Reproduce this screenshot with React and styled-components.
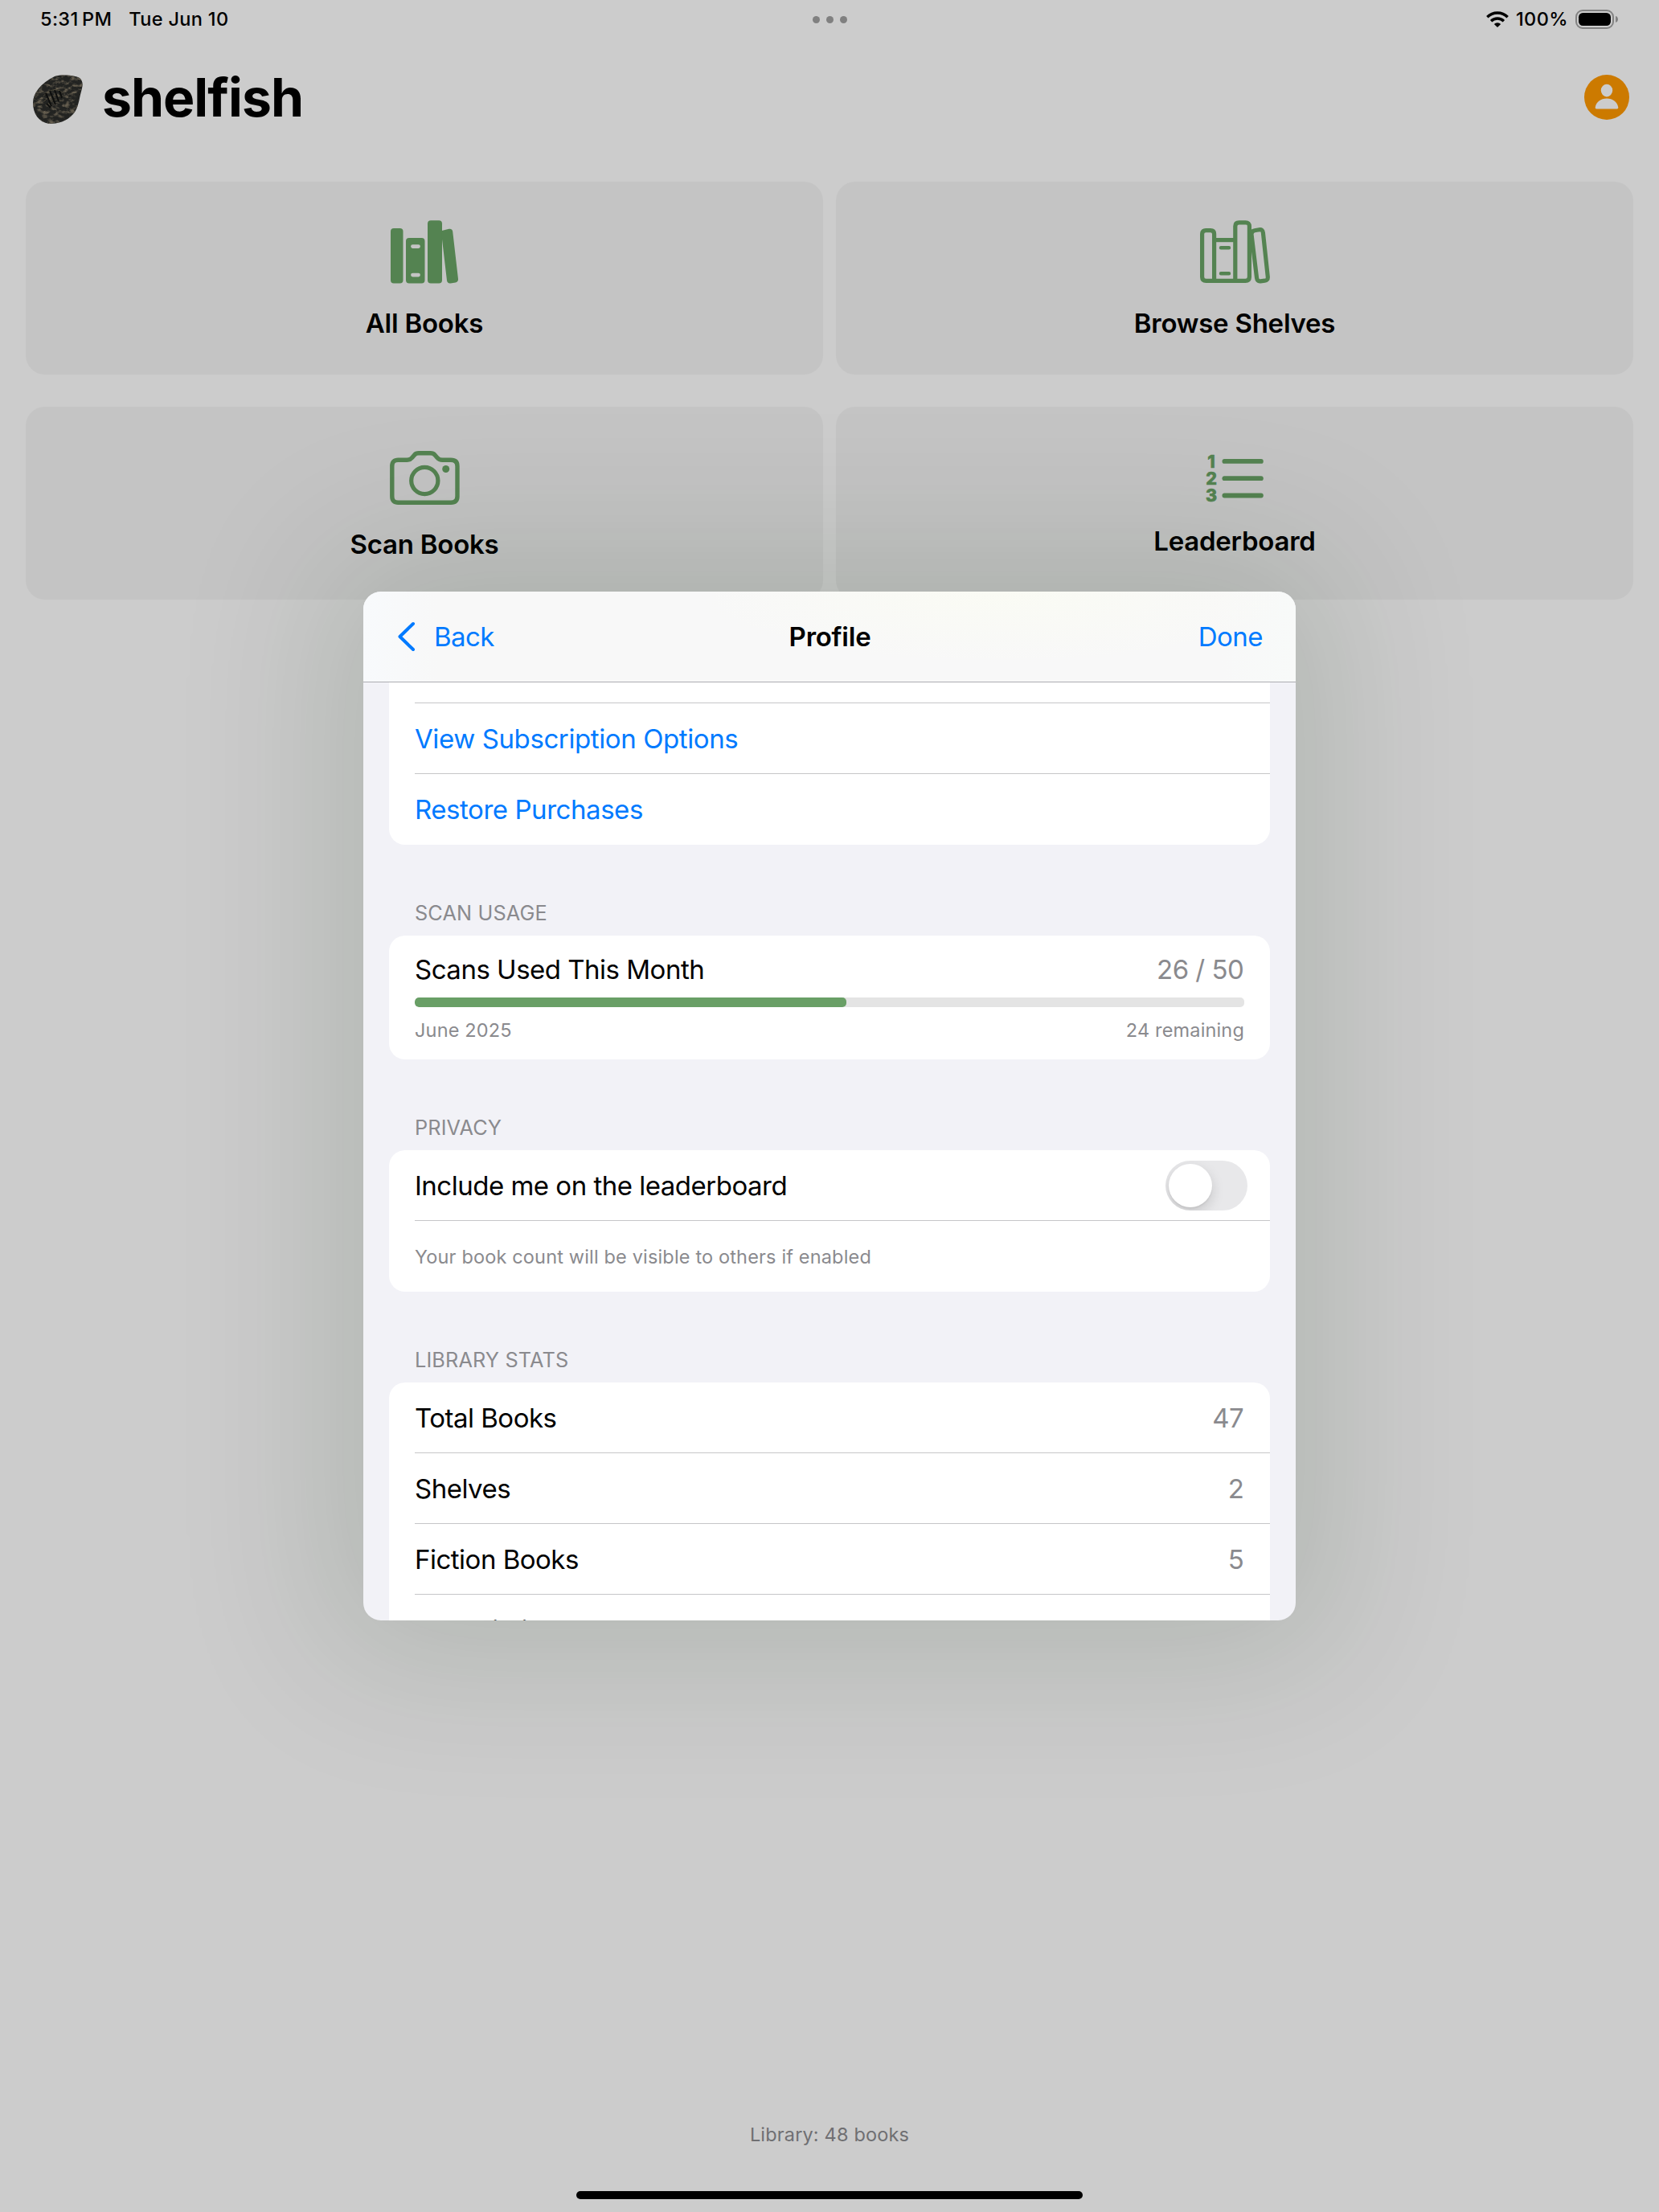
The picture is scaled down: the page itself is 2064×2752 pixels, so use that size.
import React from "react";
import styled, { createGlobalStyle } from "styled-components";

const Global = createGlobalStyle`
  * { box-sizing: border-box; }
  html, body { margin: 0; padding: 0; background: #cccccc; }
  body { font-family: Inter, "Liberation Sans", sans-serif; -webkit-font-smoothing: antialiased; }
`;

const green = "#548351";

const Screen = styled.div`
  position: relative;
  width: 2064px;
  height: 2752px;
  overflow: hidden;
  display: flex;
  flex-direction: column;
  background: #cccccc;
  color: #000;
`;

/* status bar */
const StatusBar = styled.header`
  display: grid;
  grid-template-columns: 1fr auto 1fr;
  align-items: center;
  height: 48px;
  padding: 0 51px 0 50px;
  font-size: 23.5px;
  font-weight: 500;
  line-height: 48px;
`;
const Clock = styled.div`
  display: flex;
  gap: 21px;
`;
const Label = styled.span`
  white-space: pre;
  letter-spacing: ${(p) => (p.$track === undefined ? -0.45 : p.$track)}px;
`;
const Dots = styled.div`
  display: flex;
  gap: 8px;
  padding-left: 1px;
`;
const Dot = styled.i`
  width: 9px;
  height: 9px;
  border-radius: 50%;
  background: #808080;
`;
const Indicators = styled.div`
  display: flex;
  align-items: center;
  justify-content: flex-end;
  gap: 9px;
`;

/* title bar */
const TitleBar = styled.div`
  display: flex;
  align-items: center;
  height: 178px;
  padding: 0 37px 32px 40px;
`;
const Brand = styled.h1`
  flex: 1;
  margin: 0 0 0 22px;
  font-size: 66px;
  line-height: 80px;
  font-weight: 700;
  letter-spacing: -1px;
`;

/* tiles */
const Tiles = styled.main`
  display: grid;
  grid-template-columns: 1fr 1fr;
  gap: 40px 16px;
  padding: 0 32px;
`;
const Tile = styled.section`
  display: flex;
  flex-direction: column;
  align-items: center;
  height: 240px;
  padding-top: ${(p) => p.$top}px;
  border-radius: 24px;
  background: #c4c4c4;
`;
const TileTitle = styled.h2`
  margin: ${(p) => p.$gap}px 0 0;
  font-size: 33px;
  line-height: 40px;
  font-weight: 600;
  letter-spacing: -0.24px;
`;
const Spacer = styled.div`
  flex: 1;
`;
const Footer = styled.footer`
  display: flex;
  flex-direction: column;
  align-items: center;
  color: #6f6f72;
  font-size: 23.5px;
  line-height: 32px;
  padding-bottom: 16px;
`;
const HomeIndicator = styled.div`
  width: 630px;
  height: 10px;
  margin-top: 54px;
  border-radius: 5px;
  background: #000;
`;

/* sheet */
const Overlay = styled.div`
  position: absolute;
  inset: 0;
  display: flex;
  align-items: center;
  justify-content: center;
`;
const Sheet = styled.div`
  display: flex;
  flex-direction: column;
  width: 1160px;
  height: 1280px;
  border-radius: 22px;
  overflow: hidden;
  background: #f2f2f7;
  box-shadow: 0 0 190px 48px rgba(0, 40, 0, 0.125);
`;
const NavBar = styled.div`
  flex: none;
  display: grid;
  grid-template-columns: 1fr auto 1fr;
  align-items: center;
  height: 113px;
  padding: 0 41px 0 42px;
  border-bottom: 1px solid #adadb2;
  background:
    radial-gradient(380px 90px at 68% 0, #fafbf4, rgba(250, 251, 244, 0)),
    linear-gradient(90deg, #f8fafc, #f8f8f8 8%, #f8f8f8 92%, #f8faf9);
  font-size: 33px;
  line-height: 40px;
`;
const NavButton = styled.button`
  display: flex;
  align-items: center;
  justify-self: ${(p) => (p.$end ? "end" : "start")};
  gap: 23px;
  padding: 0;
  border: 0;
  background: none;
  color: #007aff;
  font: inherit;
  letter-spacing: -0.55px;
`;
const NavTitle = styled.div`
  font-weight: 600;
  letter-spacing: -0.25px;
`;
const Body = styled.div`
  flex: 1;
  min-height: 0;
  overflow: hidden;
  padding: 0 32px;
`;
const Group = styled.section`
  border-radius: ${(p) => (p.$cut ? "0 0 20px 20px" : "20px")};
  background: #fff;
  overflow: hidden;
`;
const GroupTitle = styled.h3`
  margin: 67px 0 10px;
  padding: 0 32px;
  font-size: 25.3px;
  line-height: 36px;
  font-weight: 400;
  color: #8a8a8e;
  letter-spacing: 0.13px;
`;
const Row = styled.div`
  display: flex;
  align-items: center;
  justify-content: space-between;
  height: 88px;
  margin-left: 32px;
  padding-right: ${(p) => p.$right || 32}px;
  border-bottom: ${(p) => (p.$last ? "0" : "1px solid #c6c6c8")};
  font-size: 33px;
  line-height: 40px;
  color: ${(p) => (p.$link ? "#007aff" : "#000")};
`;
const RowTail = styled.div`
  height: 26px;
  margin-left: 32px;
  border-bottom: 1px solid #c6c6c8;
`;
const Value = styled.span`
  padding-right: 0.8px;
  color: #8a8a8e;
  letter-spacing: -0.55px;
`;
const Note = styled.span`
  color: #8a8a8e;
  font-size: 23.5px;
  letter-spacing: 0.16px;
`;
const RowNote = styled(Note)`
  padding-top: 2px;
`;
const Usage = styled.div`
  height: 154px;
  padding: 22px 32px 0;
`;
const UsageLine = styled.div`
  display: flex;
  justify-content: space-between;
  font-size: 33px;
  line-height: 40px;
`;
const UsageNotes = styled.div`
  display: flex;
  justify-content: space-between;
  line-height: 32px;
`;
const Track = styled.div`
  height: 12px;
  margin: 15px 0 13px;
  border-radius: 5px;
  background: #e4e4e4;
  overflow: hidden;
`;
const Fill = styled.div`
  height: 100%;
  border-radius: 5px;
  background: #699f66;
`;
const Toggle = styled.button`
  width: 102px;
  height: 62px;
  padding: 4px;
  border: 0;
  border-radius: 31px;
  background: #e8e8ea;
  overflow: hidden;
`;
const Knob = styled.span`
  display: block;
  width: 54px;
  height: 54px;
  border-radius: 50%;
  background: #fff;
  box-shadow: 0 6px 16px rgba(0, 0, 0, 0.15), 0 2px 2px rgba(0, 0, 0, 0.05);
`;

const ShellDrawing = styled.svg`
  margin-top: 5px;
`;
const Shell = () => (
  <ShellDrawing width="65" height="64" viewBox="0 0 65 64">
    <defs>
      <clipPath id="shell">
        <path d="M1 36C1 24 10 12 28 3C38 0 54 2 59 5C64 9 63 15 61 22C58 32 58 42 51 50C43 59 32 62 21 62C8 60 1 49 1 36Z" />
      </clipPath>
      <filter id="speck" x="0" y="0" width="100%" height="100%" colorInterpolationFilters="sRGB">
        <feTurbulence type="fractalNoise" baseFrequency="0.15 0.24" numOctaves="4" seed="11" />
        <feColorMatrix values="0 0 0 0 0.4  0 0 0 0 0.37  0 0 0 0 0.31  3.2 0 0 0 -1.45" />
      </filter>
    </defs>
    <g clipPath="url(#shell)">
      <rect width="65" height="64" fill="#222321" />
      <rect width="65" height="64" filter="url(#speck)" />
      <g fill="none" stroke="#57513f" strokeWidth="1" opacity="0.8">
        <path d="M14 28C20 19 32 17 39 24M15 34C22 26 32 24 38 30M18 39C24 32 31 30 36 34" />
      </g>
      <g fill="none" stroke="#0d0e0d" strokeWidth="2">
        <path d="M17 24L24 40M22 21L29 38M28 20L33 34M34 21L37 30M18 37L23 42" />
      </g>
    </g>
  </ShellDrawing>
);

const Avatar = () => (
  <svg width="56" height="56" viewBox="0 0 56 56">
    <circle cx="28" cy="28" r="28" fill="#cc7a00" />
    <ellipse cx="28" cy="19.6" rx="7.2" ry="7.8" fill="#ccc" />
    <path d="M15.3 42.6C13.9 42.6 13.5 41.6 13.8 40.1C15 34 20.5 29.6 28 29.6S41 34 42.2 40.1C42.5 41.6 42.1 42.6 40.7 42.6Z" fill="#ccc" />
  </svg>
);

const Wifi = () => (
  <svg width="28" height="20" viewBox="0 0 28 20">
    <g fill="none" stroke="#000" strokeWidth="3.4">
      <path d="M1.3 7.3A18 18 0 0 1 26.7 7.3" />
      <path d="M6.1 12.2A11.4 11.4 0 0 1 21.9 12.2" />
    </g>
    <path d="M14 20L9.8 15.9A6.2 6.2 0 0 1 18.2 15.9Z" />
  </svg>
);

const Battery = () => (
  <svg width="53" height="24" viewBox="0 0 53 24">
    <rect x="1" y="1" width="46" height="22" rx="8" fill="none" stroke="#828282" strokeWidth="2" />
    <rect x="4" y="4" width="40" height="16" rx="5.2" />
    <path d="M50 8C52.2 8.6 53 10.2 53 12S52.2 15.4 50 16Z" fill="#828282" />
  </svg>
);

const BooksFilled = () => (
  <svg width="84" height="80" viewBox="0 0 84 80" fill={green}>
    <rect x="0" y="10" width="15.5" height="68.5" rx="4" />
    <path fillRule="evenodd" d="M23 22H38.500A4 4 0 0 1 42.500 26V74.500A4 4 0 0 1 38.500 78.500H23A4 4 0 0 1 19 74.500V26A4 4 0 0 1 23 22ZM27.400 30.300A2.300 2.300 0 0 0 27.400 34.900H34.600A2.300 2.300 0 0 0 34.600 30.300ZM27.400 65.800A2.300 2.300 0 0 0 27.400 70.400H34.600A2.300 2.300 0 0 0 34.600 65.800Z" />
    <rect x="46" y="0.300" width="18" height="78.200" rx="4" />
    <path d="M63.800 13L72.600 10.700C75.500 10.300 77 11.600 77.200 14L84 73C84.200 75.600 83 77 80.800 77.500L74.600 78.400C72 78.800 70.400 77.600 70 75L63.800 22Z" />
  </svg>
);

const BooksOutline = () => (
  <svg width="87" height="80" viewBox="0 0 87 80" fill="none" stroke={green} strokeWidth="5.200">
    <path d="M17.600 75.400V17C17.600 14 16 12.600 13 12.600H7.200C4.200 12.600 2.600 14 2.600 17V70.500C2.600 73.800 4.400 75.400 7.500 75.400H56.500C59.600 75.400 61.400 73.800 61.400 70.500V7.600C61.400 4.500 59.800 2.800 56.600 2.800H48.600C45.400 2.800 43.800 4.500 43.800 7.600V75.400" />
    <path d="M17.600 24.600H43.800" />
    <path d="M26 34.300H36M26 66.200H36" strokeWidth="4.400" strokeLinecap="round" />
    <path d="M64 17.500C64 14.500 65 13.200 68 12.700L73.500 11.800C76.500 11.400 78 12.400 78.400 15.500L84.300 70.500C84.500 73.600 83.500 74.700 80.500 75.200L75.300 75.800C72.400 76.100 71 75 70.600 72L64 17.500Z" />
  </svg>
);

const Camera = () => (
  <svg width="87" height="68" viewBox="0 0 87 68" fill="none" stroke={green} strokeWidth="5.400">
    <path d="M10.500 11.300H21C24.500 11.300 26 10.300 27.800 8.200L30.400 5.200C32 3.300 33.200 2.800 36 2.800H50.500C53.300 2.800 54.600 3.400 56.200 5.200L58.800 8.200C60.600 10.300 62 11.300 65.500 11.300H76C81.500 11.300 84 13.800 84 19V56.500C84 61.700 81.500 64.200 76 64.200H10.500C5.300 64.200 2.800 61.700 2.800 56.500V19C2.800 13.800 5.300 11.300 10.500 11.300Z" />
    <circle cx="43.300" cy="37" r="16.600" strokeWidth="5.200" />
    <circle cx="69.700" cy="22.500" r="4.500" fill={green} stroke="none" />
  </svg>
);

const NumberText = styled.text`
  font: 800 21.5px Inter, sans-serif;
  stroke: ${green};
  stroke-width: 0.6px;
  stroke-linejoin: round;
`;
const NumberedList = () => (
  <svg width="76" height="76" viewBox="-2 -8 76 76" fill={green}>
    {[0, 1, 2].map((i) => (
      <g key={i}>
        <NumberText x="7" y={16.5 + i * 21.3} textAnchor="middle">
          {i + 1}
        </NumberText>
        <rect x="20.5" y={6 + i * 21.3} width="51.3" height="5.8" rx="2.9" />
      </g>
    ))}
  </svg>
);

const Chevron = () => (
  <svg width="23" height="40" viewBox="0 0 23 40">
    <path d="M20 4L3.500 20L20 36" fill="none" stroke="#007aff" strokeWidth="4" strokeLinecap="round" strokeLinejoin="round" />
  </svg>
);

const stats = [
  { name: "Total Books", count: "47" },
  { name: "Shelves", count: "2" },
  { name: "Fiction Books", count: "5" },
  { name: "Non-Fiction Books", count: "42" },
];

export default function App() {
  const used = 26;
  const limit = 50;
  return (
    <Screen>
      <Global />
      <StatusBar>
        <Clock>
          <Label $track={0.35}>{"5:31\u2009PM"}</Label>
          <Label $track={0.35}>Tue Jun 10</Label>
        </Clock>
        <Dots>
          <Dot />
          <Dot />
          <Dot />
        </Dots>
        <Indicators>
          <Wifi />
          <Label $track={0.4}>100%</Label>
          <Battery />
        </Indicators>
      </StatusBar>
      <TitleBar>
        <Shell />
        <Brand>shelfish</Brand>
        <Avatar />
      </TitleBar>
      <Tiles>
        <Tile $top={48}>
          <BooksFilled />
          <TileTitle $gap={28}>All Books</TileTitle>
        </Tile>
        <Tile $top={48}>
          <BooksOutline />
          <TileTitle $gap={28}>Browse Shelves</TileTitle>
        </Tile>
        <Tile $top={55}>
          <Camera />
          <TileTitle $gap={28}>Scan Books</TileTitle>
        </Tile>
        <Tile $top={51}>
          <NumberedList />
          <TileTitle $gap={20}>Leaderboard</TileTitle>
        </Tile>
      </Tiles>
      <Spacer />
      <Footer>
        <Label $track={0.16}>Library: 48 books</Label>
        <HomeIndicator />
      </Footer>

      <Overlay>
        <Sheet>
          <NavBar>
            <NavButton>
              <Chevron />
              Back
            </NavButton>
            <NavTitle>Profile</NavTitle>
            <NavButton $end>Done</NavButton>
          </NavBar>
          <Body>
            <Group $cut>
              <RowTail />
              <Row $link>
                <Label $track={-0.4}>View Subscription Options</Label>
              </Row>
              <Row $link $last>
                <Label>Restore Purchases</Label>
              </Row>
            </Group>

            <GroupTitle>SCAN USAGE</GroupTitle>
            <Group>
              <Usage>
                <UsageLine>
                  <Label $track={-0.5}>Scans Used This Month</Label>
                  <Value>
                    {used} / {limit}
                  </Value>
                </UsageLine>
                <Track>
                  <Fill style={{ width: `${(used / limit) * 100}%` }} />
                </Track>
                <UsageNotes>
                  <Note>June 2025</Note>
                  <Note>24 remaining</Note>
                </UsageNotes>
              </Usage>
            </Group>

            <GroupTitle>PRIVACY</GroupTitle>
            <Group>
              <Row $right={28}>
                <Label $track={-0.5}>Include me on the leaderboard</Label>
                <Toggle aria-label="Include me on the leaderboard">
                  <Knob />
                </Toggle>
              </Row>
              <Row $last>
                <RowNote>Your book count will be visible to others if enabled</RowNote>
              </Row>
            </Group>

            <GroupTitle>LIBRARY STATS</GroupTitle>
            <Group>
              {stats.map((stat) => (
                <Row key={stat.name}>
                  <Label $track={-0.5}>{stat.name}</Label>
                  <Value>{stat.count}</Value>
                </Row>
              ))}
            </Group>
          </Body>
        </Sheet>
      </Overlay>
    </Screen>
  );
}
